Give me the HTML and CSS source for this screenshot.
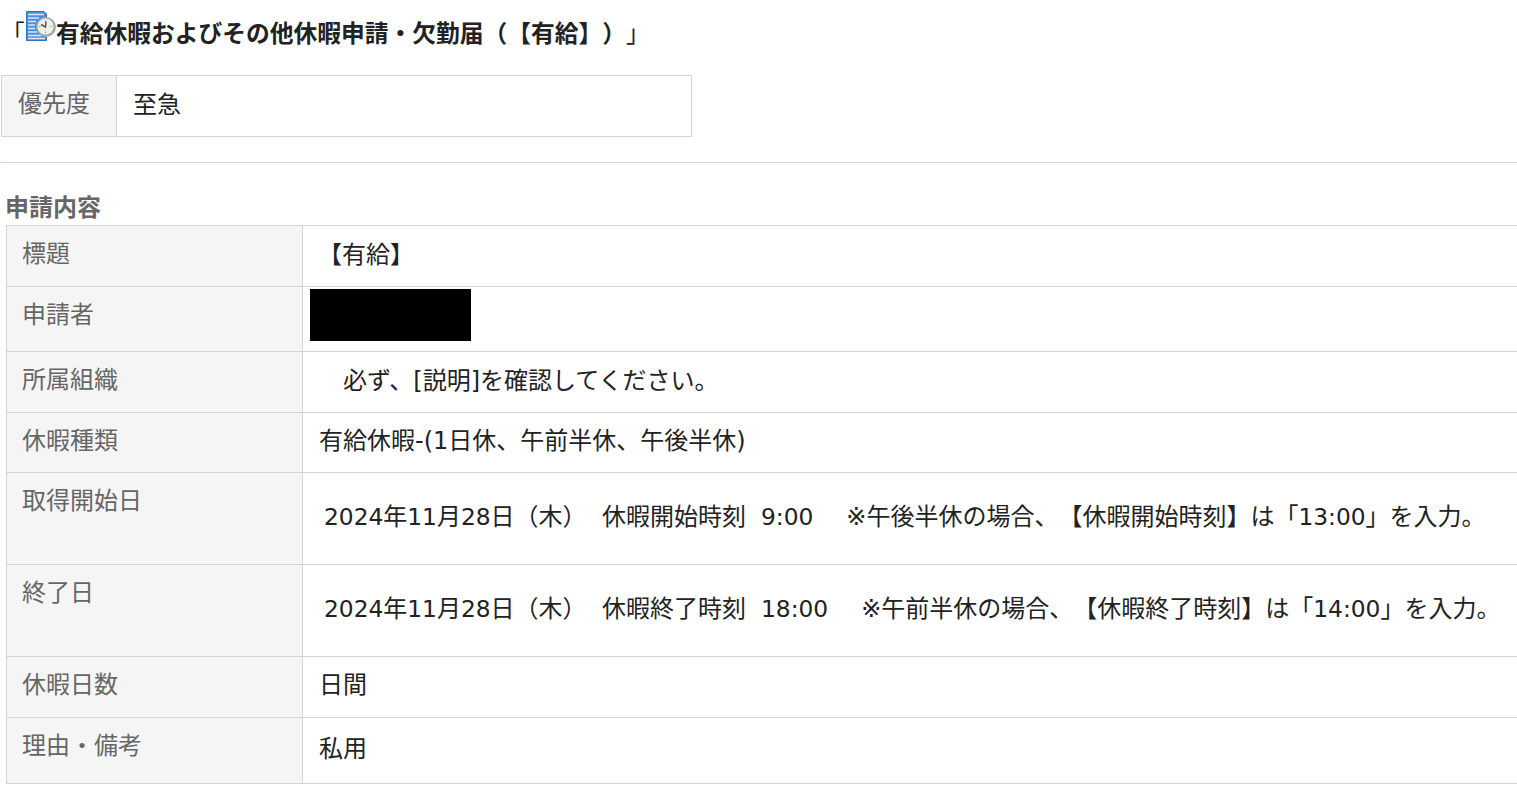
FILE: index.html
```html
<!DOCTYPE html>
<html lang="ja">
<head>
<meta charset="utf-8">
<title>有給休暇およびその他休暇申請・欠勤届</title>
<link rel="stylesheet" href="styles.css">
</head>
<body>
<h1 class="title"><span class="quote">「</span><svg class="icon" width="30" height="30" viewBox="0 0 30 30" aria-hidden="true">
<path d="M.5.5H18L20.5 3V29.5H.5Z" fill="#4a90e2" stroke="#2f72c4"/>
<path d="M2 3.500H18M2 7H13M2 10.500H10M2 14H9M2 17.500H9M2 21H11M2 24.500H15M2 27.500H19" stroke="#d9e9fb" stroke-width="1.500"/>
<circle cx="20" cy="16" r="10" fill="#a9a9a4"/>
<circle cx="19.500" cy="15.500" r="8" fill="#efefe9"/>
<path d="M19.500 9V10.500M19.500 20.500V22M13 15.500H14.500M24.500 15.500H26" stroke="#999"/>
<path d="M20 10.500L19.500 16L15 13.500" fill="none" stroke="#555" stroke-width="1.500"/>
</svg><span>有給休暇およびその他休暇申請・欠勤届（【有給】）</span><span class="quote">」</span></h1>
<table class="priority">
<tr><th>優先度</th><td>至急</td></tr>
</table>
<hr class="rule">
<h2 class="section">申請内容</h2>
<table class="form">
<tr class="r1"><th>標題</th><td><span class="in-title">【有給】</span></td></tr>
<tr class="r2"><th>申請者</th><td><div class="redacted"></div></td></tr>
<tr class="r3"><th>所属組織</th><td><span class="in-note">必ず、[説明]を確認してください。</span></td></tr>
<tr class="r4"><th>休暇種類</th><td>有給休暇-(1日休、午前半休、午後半休)</td></tr>
<tr class="r5"><th>取得開始日</th><td><div class="date"><span><b class="n">2024</b>年<b class="n">11</b>月<b class="n">28</b>日（木）</span><span>休暇開始時刻</span><span><b class="n">9:00</b></span><span>※午後半休の場合、【休暇開始時刻】は「<b class="n">13:00</b>」を入力。</span></div></td></tr>
<tr class="r5"><th>終了日</th><td><div class="date"><span><b class="n">2024</b>年<b class="n">11</b>月<b class="n">28</b>日（木）</span><span>休暇終了時刻</span><span><b class="n">18:00</b></span><span>※午前半休の場合、【休暇終了時刻】は「<b class="n">14:00</b>」を入力。</span></div></td></tr>
<tr class="r7"><th>休暇日数</th><td>日間</td></tr>
<tr class="r6"><th>理由・備考</th><td class="reason">私用</td></tr>
</table>
</body>
</html>
```
FILE: styles.css
```css
html, body { margin: 0; padding: 0; background: #fff; overflow: hidden; }
body {
  font-family: "DejaVu Sans", "Noto Sans CJK JP", "Noto Sans", sans-serif;
  font-size: 24px;
  color: #222;
  padding-left: 1px;
  height: 787px;
  box-sizing: border-box;
  text-spacing-trim: space-all;
}
.title {
  display: flex;
  align-items: flex-start;
  margin: 0;
  padding: 11px 0 0 0;
  height: 75px;
  box-sizing: border-box;
  font-size: 23.75px;
  line-height: 34px;
  font-weight: 700;
  color: #222;
}
.quote { font-weight: 400; }
.title > span { margin-top: 6px; }
.title .quote:first-child { width: 25px; }
.icon { display: block; flex: none; }
.n { font-weight: 400; font-size: 23.3px; }
table { border-collapse: collapse; table-layout: fixed; }
th, td { border: 1px solid #d4d4d4; box-sizing: border-box; font-weight: 400; text-align: left; padding: 0 0 0 16px; }
th { background: #f5f5f5; color: #666; vertical-align: top; }
.priority { width: 691px; }
.priority th { width: 115px; height: 61px; padding-top: 11px; line-height: 34px; }
.priority td { line-height: 34px; padding-bottom: 3px; }
.rule { border: 0; border-top: 1px solid #d4d4d4; margin: 25px 0 0; height: 0; }
.section { margin: 26px 0 0 4px; font-size: 24px; line-height: 38px; height: 36px; font-weight: 700; color: #666; }
.form { width: 1520px; margin-left: 5px; }
.form tr > th:first-child { width: 296px; }
.form th { line-height: 34px; padding-left: 15px; padding-top: 11px; }
.form td { line-height: 34px; }
.r1 { height: 61px; }
.r2 { height: 65px; }
.r3 { height: 61px; }
.r4 { height: 60px; }
.r5 { height: 92px; }
.r6 { height: 66px; }
.r7 { height: 61px; }
.r1 td, .r3 td { padding-bottom: 2px; }
.r4 td, .r7 td { padding-bottom: 4px; }
.in-title { margin-left: -1px; }
.in-note { margin-left: 24px; }
.redacted { width: 161px; height: 52px; background: #000; margin: -9px 0 0 -9px; }
.date { display: flex; padding: 0 0 4px 5px; }
.date span:nth-child(1) { width: 278px; }
.date span:nth-child(2) { width: 159px; }
.date span:nth-child(3) { margin-right: 33px; }
.reason { padding-bottom: 4px; }
```
